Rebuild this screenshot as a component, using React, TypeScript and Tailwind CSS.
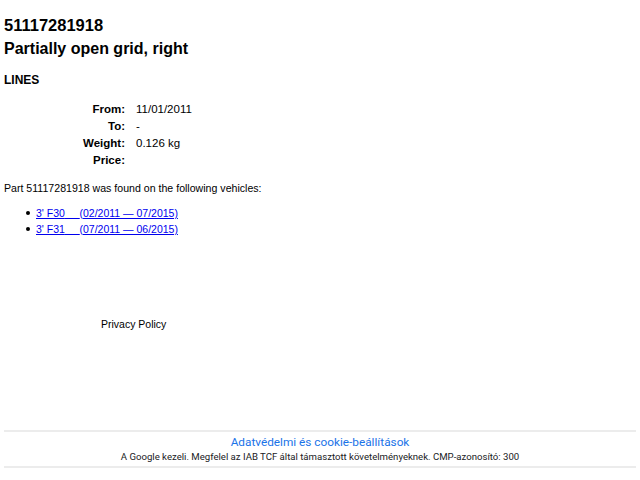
import React from 'react';

const vehicles = [
  { model: "3' F30", range: '(02/2011 — 07/2015)' },
  { model: "3' F31", range: '(07/2011 — 06/2015)' },
];

const specs = [
  { label: 'From:', value: '11/01/2011' },
  { label: 'To:', value: '-' },
  { label: 'Weight:', value: '0.126 kg' },
  { label: 'Price:', value: '' },
];

export default function App() {
  return (
    <div className="min-h-[480px] bg-white px-[4px] text-black font-['Liberation_Sans',Arial,sans-serif]">
      {/* Part header */}
      <h1 className="pt-[15px] text-[16.5px] font-bold leading-[20px]">51117281918</h1>
      <h2 className="mt-[4px] text-[16px] font-bold leading-[20px]">Partially open grid, right</h2>
      <h3 className="mt-[13px] text-[12px] font-bold leading-[16px]">LINES</h3>

      {/* Specs */}
      <div className="mt-[13px] grid grid-cols-[121px_1fr] gap-x-[11px] text-[11.5px] leading-[17px]">
        {specs.map((s) => (
          <React.Fragment key={s.label}>
            <div className="text-right font-bold">{s.label}</div>
            <div>{s.value}</div>
          </React.Fragment>
        ))}
      </div>

      <p className="mt-[12px] text-[10.6px] leading-[14px]">
        Part 51117281918 was found on the following vehicles:
      </p>

      <ul className="mt-[10px] text-[10.5px] leading-[16px]">
        {vehicles.map((v) => (
          <li key={v.model} className="flex items-center pl-[22px]">
            <span className="mr-[6px] h-[4px] w-[4px] rounded-full bg-black" />
            <a href="#" className="text-[#0000ee] underline">
              {v.model}&nbsp;&nbsp;&nbsp;&nbsp;&nbsp;{v.range}
            </a>
          </li>
        ))}
      </ul>

      <div className="mt-[80px] pl-[97px] text-[10.5px] leading-[14px]">Privacy Policy</div>

      {/* Consent banner */}
      <div className="fixed bottom-[12px] left-[4px] right-[4px] flex h-[38px] flex-col items-center justify-center border-y-2 border-[#ececec] bg-white font-['Roboto',sans-serif]">
        <a href="#" className="text-[11.8px] leading-[16px] text-[#1a73e8]">
          Adatvédelmi és cookie-beállítások
        </a>
        <div className="text-[9.6px] leading-[14px] text-[#202124]">
          A Google kezeli. Megfelel az IAB TCF által támasztott követelményeknek. CMP-azonosító: 300
        </div>
      </div>
    </div>
  );
}
